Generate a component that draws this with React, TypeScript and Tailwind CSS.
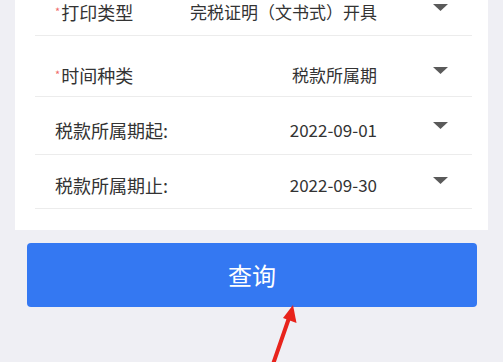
const ROWS = [
  { label: '打印类型', required: true, value: '完税证明（文书式）开具', h: 'h-[58px]', pt: 'pt-[10px]' },
  { label: '时间种类', required: true, value: '税款所属期', h: 'h-[61px]', pt: 'pt-[17px]' },
  { label: '税款所属期起:', required: false, value: '2022-09-01', h: 'h-[58px]', pt: 'pt-[8px]' },
  { label: '税款所属期止:', required: false, value: '2022-09-30', h: 'h-[54px]', pt: 'pt-[6px]' },
]

function Caret() {
  return (
    <svg width="15" height="7" viewBox="0 0 15 7" className="mb-[8px] ml-[56px] shrink-0" aria-hidden>
      <path d="M0 0 H15 L7.5 7 Z" fill="#5a5a5a" />
    </svg>
  )
}

export default function App() {
  return (
    <div
      className="relative h-[362px] w-[503px] overflow-hidden bg-[#efeff4] px-[15px]"
      style={{ fontFamily: '"Noto Sans CJK SC", "Noto Sans", sans-serif' }}
    >
      <div className="-mt-[22px] bg-white pb-[21px] pl-[20px] pr-[16px]">
        {ROWS.map((row) => (
          <div
            key={row.label}
            className={`flex items-center border-b border-[#ececec] pl-[20px] pr-[24px] ${row.h} ${row.pt}`}
          >
            <span className="shrink-0 text-[18px] leading-none text-[#333]">
              {row.required && (
                <span className="relative -top-[4px] mr-[1px] text-[11px] text-[#f06a6a]">*</span>
              )}
              {row.label}
            </span>
            <span className="flex-1 text-right text-[17px] leading-none text-[#333]">
              {row.value}
            </span>
            <Caret />
          </div>
        ))}
      </div>

      <button className="ml-[12px] mr-[11px] mt-[13px] flex h-[64px] w-[450px] items-center justify-center rounded-[4px] bg-[#3478f2] text-[24px] text-white">
        查询
      </button>

      <svg
        className="pointer-events-none absolute left-0 top-0"
        width="503"
        height="362"
        viewBox="0 0 503 362"
        aria-hidden
      >
        <line x1="271" y1="370" x2="289" y2="318" stroke="#e8231c" strokeWidth="4" strokeLinecap="round" />
        <path d="M293 305 L296.5 323 L283 318 Z" fill="#e8231c" />
      </svg>
    </div>
  )
}
